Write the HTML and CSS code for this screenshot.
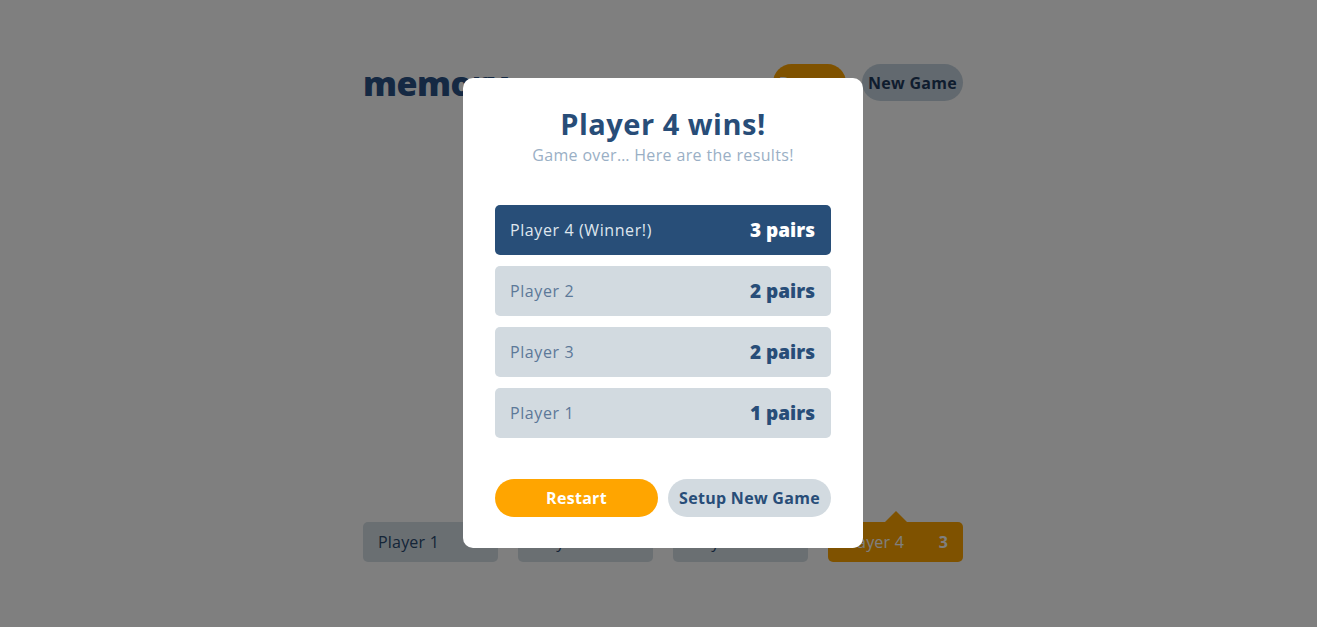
FILE: index.html
```html
<!DOCTYPE html>
<html>
<head>
<meta charset="utf-8">
<link rel="stylesheet" href="styles.css">
</head>
<body>
<div class="shell">
  <div class="page">
    <header class="top">
      <h1 class="logo">memory</h1>
      <div class="actions">
        <button class="pill pill-orange">Restart</button>
        <button class="pill pill-light">New Game</button>
      </div>
    </header>
    <main class="board"></main>
    <footer class="players">
      <div class="player"><span>Player 1</span><b>1</b></div>
      <div class="player"><span>Player 2</span><b>2</b></div>
      <div class="player"><span>Player 3</span><b>2</b></div>
      <div class="player active"><span>Player 4</span><b>3</b></div>
    </footer>
  </div>
</div>
<div class="overlay">
  <div class="modal">
    <h2 class="title">Player 4 wins!</h2>
    <p class="subtitle">Game over… Here are the results!</p>
    <div class="results">
      <div class="row winner"><span>Player 4 (Winner!)</span><b>3 pairs</b></div>
      <div class="row"><span>Player 2</span><b>2 pairs</b></div>
      <div class="row"><span>Player 3</span><b>2 pairs</b></div>
      <div class="row"><span>Player 1</span><b>1 pairs</b></div>
    </div>
    <div class="buttons">
      <button class="btn btn-orange">Restart</button>
      <button class="btn btn-light">Setup New Game</button>
    </div>
  </div>
</div>
</body>
</html>
```

FILE: styles.css
```css
* { box-sizing: border-box; }
html, body { margin: 0; height: 100%; }
body {
  background: #fefefe;
  font-family: "Open Sans", "Liberation Sans", sans-serif;
  color: #284d78;
}
.shell {
  height: 100%;
  display: flex;
  justify-content: center;
  padding-left: 9px;
}
.page {
  width: 600px;
  height: 100%;
  display: flex;
  flex-direction: column;
  padding: 64px 0 65px;
}
.top {
  height: 37px;
  display: flex;
  align-items: center;
  justify-content: space-between;
}
.logo {
  margin: 0;
  font-size: 34px;
  font-weight: 800;
  letter-spacing: -0.5px;
  color: #2a5286;
}
.actions { display: flex; gap: 16px; }
.pill {
  border: 0;
  height: 37px;
  border-radius: 19px;
  font-family: inherit;
  font-weight: 700;
  font-size: 16px;
  letter-spacing: 0.3px;
  padding: 0 4px;
}
.pill-orange { background: #ffa500; color: #fff; width: 73px; }
.pill-light { background: #c5d3de; color: #1f3a5c; width: 101px; }
.board { flex: 1; }
.players {
  height: 40px;
  display: flex;
  gap: 20px;
}
.player {
  flex: 1;
  position: relative;
  background: #d4dee4;
  border-radius: 5px;
  display: flex;
  align-items: center;
  justify-content: space-between;
  padding: 0 15px;
  font-size: 16px;
  letter-spacing: 0.2px;
  color: #2a4a70;
}
.player b { font-size: 16px; }
.player.active { background: #ffa500; color: #fff; }
.player.active::before {
  content: "";
  position: absolute;
  top: -11px;
  left: 50%;
  margin-left: -11px;
  border-left: 11px solid transparent;
  border-right: 11px solid transparent;
  border-bottom: 11px solid #ffa500;
}
.overlay {
  position: fixed;
  inset: 0;
  background: rgba(0, 0, 0, 0.5);
  display: flex;
  align-items: center;
  justify-content: center;
  padding-left: 9px;
  padding-bottom: 1px;
}
.modal {
  width: 400px;
  height: 470px;
  background: #fff;
  border-radius: 10px;
  padding: 27px 32px 31px;
  display: flex;
  flex-direction: column;
}
.title {
  margin: 0;
  text-align: center;
  font-size: 29px;
  font-weight: 700;
  letter-spacing: 0.5px;
  line-height: 38px;
  color: #284d78;
}
.subtitle {
  margin: 2px 0 0;
  text-align: center;
  font-size: 16px;
  letter-spacing: 0.35px;
  line-height: 20px;
  color: #9aafc5;
}
.results {
  margin-top: 40px;
  display: flex;
  flex-direction: column;
  gap: 11px;
}
.row {
  height: 50px;
  border-radius: 5px;
  background: #d2dae0;
  display: flex;
  align-items: center;
  justify-content: space-between;
  padding: 0 16px 0 15px;
  font-size: 16px;
  letter-spacing: 0.6px;
  color: #5c7898;
}
.row b { font-size: 19px; font-weight: 800; letter-spacing: 0; color: #284d78; }
.row.winner { background: #284e78; color: #dfe6ee; }
.row.winner b { color: #fff; }
.buttons {
  margin-top: auto;
  display: flex;
  gap: 10px;
}
.btn {
  flex: 1;
  height: 38px;
  border: 0;
  border-radius: 19px;
  font-family: inherit;
  font-weight: 700;
  font-size: 16px;
  letter-spacing: 0.3px;
}
.btn-orange { background: #ffa500; color: #fff; }
.btn-light { background: #d2dae0; color: #284d78; }
```
